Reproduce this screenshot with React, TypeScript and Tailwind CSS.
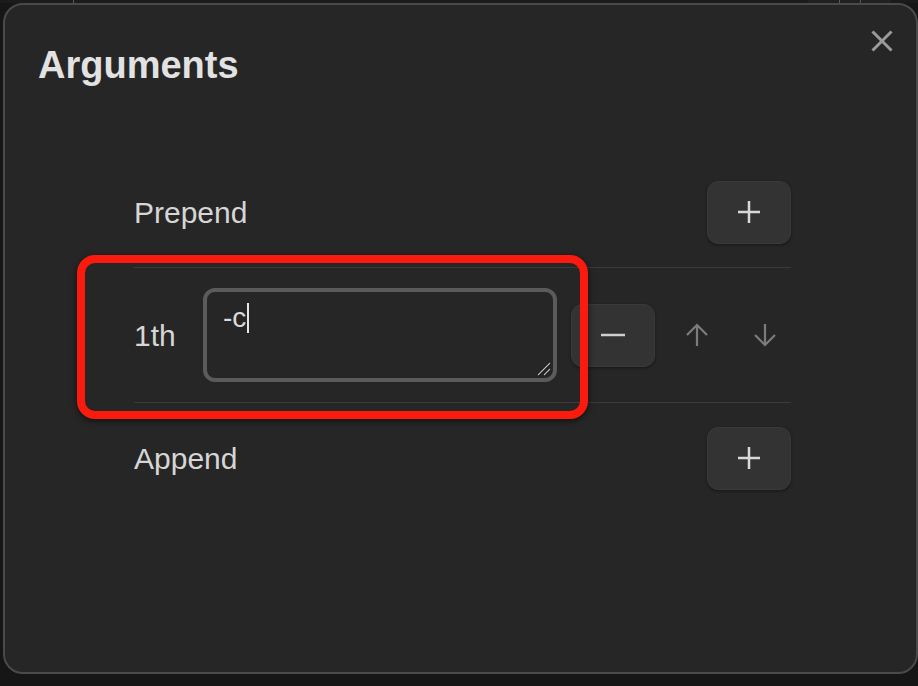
import React from "react";

const PlusIcon = () => (
  <svg width="24" height="24" viewBox="0 0 24 24" fill="none" stroke="#d9d9d9" strokeWidth="2.5">
    <path d="M12 1v22M1 12h22" />
  </svg>
);

const MinusIcon = () => (
  <svg width="24" height="24" viewBox="0 0 24 24" fill="none" stroke="#cfcfcf" strokeWidth="2.5">
    <path d="M0 12h24" />
  </svg>
);

const ArrowUp = () => (
  <svg width="24" height="24" viewBox="0 0 24 24" fill="none" stroke="#7c7c7c" strokeWidth="2.2">
    <path d="M12 23V2M2 12L12 2l10 10" />
  </svg>
);

const ArrowDown = () => (
  <svg width="24" height="24" viewBox="0 0 24 24" fill="none" stroke="#7c7c7c" strokeWidth="2.2">
    <path d="M12 1v21M2 12l10 10 10-10" />
  </svg>
);

const SquareButton = ({ children }: { children: React.ReactNode }) => (
  <button
    type="button"
    className="flex items-center justify-center w-[84px] h-[63px] shrink-0 rounded-[11px] bg-[#333333] border border-[#3a3a3a] shadow-[0_1px_3px_rgba(0,0,0,0.45)]"
  >
    {children}
  </button>
);

const App = () => {
  return (
    <div className="relative w-[918px] h-[686px] overflow-hidden bg-[#161616] font-['Liberation_Sans',Arial,sans-serif]">
      {/* page behind the dialog */}
      <div className="flex h-[3px] bg-[#1b1b1b]">
        <div className="ml-[73px] w-px bg-[#5a5a5a]" />
        <div className="ml-auto mr-[27px] flex w-[83px] bg-[#212121]">
          <div className="ml-[31px] w-px bg-[#5a5a5a]" />
          <div className="ml-[20px] w-px bg-[#5a5a5a]" />
        </div>
      </div>

      {/* dialog */}
      <div className="relative ml-[3px] w-[915px] h-[671px] rounded-[20px] border-2 border-[#4a4a4a] bg-[#262626]">
        <button type="button" className="absolute top-[25px] right-[23px]">
          <svg width="22" height="22" viewBox="0 0 22 22" fill="none" stroke="#9b9b9b" strokeWidth="3">
            <path d="M1.5 1.5l19 19M20.5 1.5l-19 19" />
          </svg>
        </button>

        <h1 className="mt-[41px] ml-[33px] text-[38px] leading-[38px] font-bold text-[#e2e2e2]">Arguments</h1>

        <div className="ml-[129px] mt-[73px] w-[657px]">
          <div className="flex h-[110px] items-center justify-between">
            <span className="mt-[2px] text-[30px] leading-[30px] text-[#d6d6d6]">Prepend</span>
            <SquareButton>
              <PlusIcon />
            </SquareButton>
          </div>

          <div className="h-px bg-[#3a3a3a]" />

          <div className="flex h-[134px] items-center">
            <span className="mt-[2px] w-[69px] shrink-0 text-[30px] leading-[30px] text-[#d6d6d6]">1th</span>
            <div className="relative w-[354px] h-[94px] shrink-0 rounded-[12px] border-4 border-[#5b5b5b] bg-[#262626] pl-[16px] pt-[11px]">
              <div className="flex items-start text-[28px] leading-[30px] text-[#dadada]">
                <span>-c</span>
                <span className="ml-px inline-block w-[2px] h-[30px] bg-[#e6e6e6]" />
              </div>
              <svg className="absolute right-[2px] bottom-[2px]" width="14" height="14" viewBox="0 0 14 14" fill="none">
                <path d="M1 13L13 1M7 13l6-6" stroke="#111" strokeWidth="2.6" />
                <path d="M1 13L13 1M7 13l6-6" stroke="#bdbdbd" strokeWidth="1.2" />
              </svg>
            </div>
            <div className="ml-[14px]">
              <SquareButton>
                <MinusIcon />
              </SquareButton>
            </div>
            <button type="button" className="ml-[30px]">
              <ArrowUp />
            </button>
            <button type="button" className="ml-[44px]">
              <ArrowDown />
            </button>
          </div>

          <div className="h-px bg-[#3a3a3a]" />

          <div className="flex h-[110px] items-center justify-between">
            <span className="mt-[2px] text-[30px] leading-[30px] text-[#d6d6d6]">Append</span>
            <SquareButton>
              <PlusIcon />
            </SquareButton>
          </div>
        </div>
      </div>

      {/* red highlight annotation */}
      <div className="absolute left-[77px] top-[255px] w-[511px] h-[164px] rounded-[18px] border-[8px] border-[#fb1a0e] shadow-[0_2px_6px_rgba(0,0,0,0.6)]" />
    </div>
  );
};

export default App;
